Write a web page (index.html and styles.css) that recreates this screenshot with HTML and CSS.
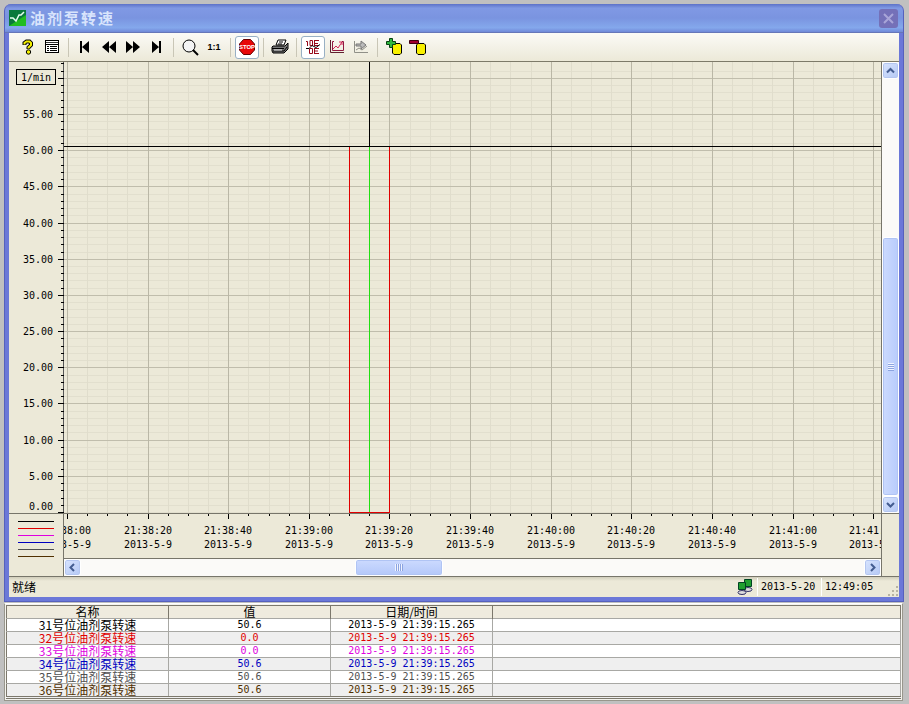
FILE: index.html
```html
<!DOCTYPE html>
<html lang="zh-CN">
<head>
    <meta charset="UTF-8">
    <meta name="viewport" content="width=device-width, initial-scale=1.0">
    <title>油剂泵转速</title>
    <link rel="stylesheet" href="styles.css">
</head>
<body>
    <div class="window">
        <header class="titlebar">
            <svg class="logo" width="17" height="16" viewBox="0 0 17 16"><rect width="17" height="16" fill="#0a7a3c"/><path d="M0 16L17 5V16Z" fill="#20bd20"/><path d="M1 8H4L7 11L10 5H12L15 2" stroke="#e8fff0" stroke-width="1.500" fill="none"/></svg>
            <h1>油剂泵转速</h1>
            <button class="close" aria-label="关闭"><svg width="19" height="19" viewBox="0 0 19 19"><path d="M5 5L14 14M14 5L5 14" stroke="#a9a5d8" stroke-width="2"/></svg></button>
        </header>

        <div class="toolbar">
            <button aria-label="帮助"><svg width="16" height="16" viewBox="0 0 16 16"><path d="M4.500 6V4L6.500 2.500H9.500L11 4V6L8.500 8.500V10" stroke="#000" stroke-width="4" fill="none"/><path d="M4.500 5.500V4L6.500 2.500H9.500L11 4V6L8.500 8.500V9.500" stroke="#f4f000" stroke-width="2" fill="none"/><circle cx="8.500" cy="13" r="2.200" fill="#f4f000" stroke="#000"/></svg></button>
            <button aria-label="属性"><svg width="16" height="16" viewBox="0 0 16 16" shape-rendering="crispEdges"><path d="M1.500 1.500H14.500V13.500H1.500Z" fill="#fff" stroke="#000"/><path d="M2 3.500H14" stroke="#333"/><path d="M1 5.500H15" stroke="#000"/><path d="M3 7.500H5M6 7.500H13M3 9.500H5M6 9.500H13M3 11.500H5M6 11.500H13" stroke="#000"/></svg></button>
            <span class="sep"></span>
            <button aria-label="第一条"><svg width="16" height="16" viewBox="0 0 16 16"><path d="M3 2H5V14H3ZM12 2V14L5 8Z"/></svg></button>
            <button aria-label="后退"><svg width="16" height="16" viewBox="0 0 16 16"><path d="M8 2V14L1 8ZM15 2V14L8 8Z"/></svg></button>
            <button aria-label="前进"><svg width="16" height="16" viewBox="0 0 16 16"><path d="M1 2V14L8 8ZM8 2V14L15 8Z"/></svg></button>
            <button aria-label="最后一条"><svg width="16" height="16" viewBox="0 0 16 16"><path d="M3 2V14L10 8ZM10 2H12V14H10Z"/></svg></button>
            <span class="sep"></span>
            <button aria-label="缩放"><svg width="18" height="18" viewBox="0 0 18 18"><circle cx="8" cy="8" r="6" fill="#f4f4f4" stroke="#000"/><path d="M12 12L17 17" stroke="#000" stroke-width="2"/></svg></button>
            <button class="ratio">1:1</button>
            <span class="sep"></span>
            <button class="on" aria-label="停止"><svg width="16" height="16" viewBox="0 0 16 16"><path d="M4.500 .5H11.500L15.500 5V11L11.500 15.500H4.500L.5 11V5Z" fill="#e80808" stroke="#600"/><text class="stop" x="8" y="10">STOP</text></svg></button>
            <span class="sep"></span>
            <button aria-label="打印"><svg width="18" height="16" viewBox="0 0 18 16"><path d="M5 6L7 1H15L13 6Z" fill="#fff" stroke="#000"/><path d="M8 3H12M7 5H11" stroke="#000"/><path d="M2 7H14L17 4V10L13 14H2L1 12V8Z" fill="#777" stroke="#000"/><path d="M1 9.500H13M2 12H13L16 8" stroke="#000" fill="none"/><path d="M3 11H11" stroke="#eee"/></svg></button>
            <span class="sep"></span>
            <button class="on" aria-label="标尺"><svg width="16" height="16" viewBox="0 0 16 16" fill="none"><path d="M1 2.500H2.500V7M5 1.500H7.500V6.500H5ZM9 1.500H14M9.500 1V7M9 4.500H13M9 6.500H14M4.500 9.500H7.500V14.500H4.500ZM9 9.500H14M9.500 9V15M9 12H13M9 14.500H14" stroke="#980818"/><path d="M1 9.500H4L7 6.500L11 8.500L15 5.500" stroke="#000"/></svg></button>
            <button aria-label="曲线"><svg width="16" height="16" viewBox="0 0 16 16" fill="none"><path d="M1.500 1V13.500H15" stroke="#602030"/><path d="M5 2.500H3.500V11.500H14.500V2.500H13" stroke="#901840"/><path d="M4 10L7 7L9 9L13 3M10 3H13V6" stroke="#d02858"/></svg></button>
            <button aria-label="导出" disabled><svg width="16" height="16" viewBox="0 0 16 16" fill="none"><path d="M1.500 2V13.500H15M3 11L6 9L9 11L14 7" stroke="#909088"/><path d="M3 5H8V2L13 6L8 10V7H3Z" fill="#bbb" stroke="#777"/></svg></button>
            <span class="sep"></span>
            <button aria-label="添加变量"><svg width="18" height="18" viewBox="0 0 18 18"><path d="M7.500 7L9 5.500H15L16.500 7V15L15 16.500H9L7.500 15Z" fill="#f8f000" stroke="#000"/><path d="M4.500 .5H7.500V3.500H10.500V6.500H7.500V9.500H4.500V6.500H1.500V3.500H4.500Z" fill="#30b840" stroke="#084010"/></svg></button>
            <button aria-label="删除变量"><svg width="18" height="18" viewBox="0 0 18 18"><path d="M7.500 7L9 5.500H15L16.500 7V15L15 16.500H9L7.500 15Z" fill="#f8f000" stroke="#000"/><path d="M.5 2.500H9.500V5.500H.5Z" fill="#a00030" stroke="#400010"/></svg></button>
        </div>

        <main class="chart">
            <svg class="y-axis" id="yAxis"></svg>
            <svg class="plot" id="plot"></svg>
            <div class="scroll vertical">
                <button aria-label="向上"><svg width="9" height="9" viewBox="0 0 9 9"><path d="M1 6.500L4.500 3L8 6.500"/></svg></button>
                <div class="track"><div class="thumb"></div></div>
                <button aria-label="向下"><svg width="9" height="9" viewBox="0 0 9 9"><path d="M1 3L4.500 6.500L8 3"/></svg></button>
            </div>
            <div class="legend">
                <i class="c31"></i><i class="c32"></i><i class="c33"></i><i class="c34"></i><i class="c35"></i><i class="c36"></i>
            </div>
            <svg class="x-axis" id="xAxis"></svg>
            <div class="scroll horizontal">
                <button aria-label="向左"><svg width="9" height="9" viewBox="0 0 9 9"><path d="M6 1L2.500 4.500L6 8"/></svg></button>
                <div class="track"><div class="thumb"></div></div>
                <button aria-label="向右"><svg width="9" height="9" viewBox="0 0 9 9"><path d="M3 1L6.500 4.500L3 8"/></svg></button>
            </div>
            <div class="corner"></div>
        </main>

        <footer class="status">
            <span class="ready">就绪</span>
            <svg class="net" width="16" height="16" viewBox="0 0 16 16"><path d="M7.500 .5H14.500V7.500H7.500Z" fill="#20a030" stroke="#042"/><ellipse cx="11" cy="10.500" rx="4" ry="2" fill="#ddd" stroke="#336"/><path d="M1.500 3.500H8.500V10.500H1.500Z" fill="#20a030" stroke="#042"/><ellipse cx="5" cy="13.500" rx="4" ry="2" fill="#ddd" stroke="#336"/></svg>
            <span class="cell">2013-5-20</span>
            <span class="cell time">12:49:05</span>
            <svg class="grip" width="12" height="12" viewBox="0 0 12 12" fill="#b8b4a2"><path d="M9 1H11V3H9ZM9 5H11V7H9ZM5 5H7V7H5ZM9 9H11V11H9ZM5 9H7V11H5ZM1 9H3V11H1Z"/></svg>
        </footer>
    </div>

    <div class="panel">
        <table>
            <thead>
                <tr><th>名称</th><th>值</th><th>日期/时间</th><th class="rest"></th></tr>
            </thead>
            <tbody>
                <tr class="c31"><td class="name">31号位油剂泵转速</td><td>50.6</td><td>2013-5-9 21:39:15.265</td><td></td></tr>
                <tr class="c32"><td class="name">32号位油剂泵转速</td><td>0.0</td><td>2013-5-9 21:39:15.265</td><td></td></tr>
                <tr class="c33"><td class="name">33号位油剂泵转速</td><td>0.0</td><td>2013-5-9 21:39:15.265</td><td></td></tr>
                <tr class="c34"><td class="name">34号位油剂泵转速</td><td>50.6</td><td>2013-5-9 21:39:15.265</td><td></td></tr>
                <tr class="c35"><td class="name">35号位油剂泵转速</td><td>50.6</td><td>2013-5-9 21:39:15.265</td><td></td></tr>
                <tr class="c36"><td class="name">36号位油剂泵转速</td><td>50.6</td><td>2013-5-9 21:39:15.265</td><td></td></tr>
            </tbody>
        </table>
    </div>

    <script src="script.js"></script>
</body>
</html>
```
FILE: styles.css
```css
* {
    box-sizing: border-box;
}
body {
    margin: 0;
    height: 100vh;
    padding: 4px 6px 3px 4px;
    display: flex;
    flex-direction: column;
    background: #c0c0c0;
    font-family: "DejaVu Sans Mono", "Noto Sans CJK SC", monospace;
    font-size: 10px;
    color: #000;
}
svg {
    display: block;
}
button {
    padding: 0;
    border: 0;
    background: none;
    font: inherit;
    color: inherit;
    display: flex;
    align-items: center;
    justify-content: center;
}

/* window */
.window {
    flex: 1;
    min-height: 0;
    display: flex;
    flex-direction: column;
    padding: 0 4px 4px;
    background: #6b78d8;
    border: 1px solid #5661bd;
    border-top: 0;
    border-radius: 7px 7px 0 0;
    margin-right: -1px;
}
.titlebar {
    height: 29px;
    flex: none;
    display: flex;
    align-items: center;
    gap: 4px;
    margin: 0 -4px;
    padding: 0 5px 0 4px;
    border-radius: 7px 7px 0 0;
    background: linear-gradient(#5c72c8, #8099e4 15%, #7a94e0 50%, #84a8ec 85%, #7088d8);
    border-bottom: 1px solid #6676b8;
}
h1 {
    flex: 1;
    margin: 0;
    font: bold 15px/20px "Noto Sans CJK SC", sans-serif;
    letter-spacing: 2px;
    color: #d8e4fc;
}
.close {
    width: 19px;
    height: 19px;
    border-radius: 3px;
    background: #7470b8;
}

.toolbar {
    height: 29px;
    flex: none;
    display: flex;
    align-items: center;
    padding: 0 7px;
    background: linear-gradient(#fbfaf6, #ece9d8);
    border-bottom: 1px solid #7d7a69;
}
.toolbar button {
    width: 24px;
    height: 23px;
}
.toolbar .on {
    background: #fff;
    border: 1px solid #98b0c4;
    border-radius: 3px;
}
.toolbar .ratio {
    font: bold 9px "Liberation Sans", sans-serif;
}
.sep {
    width: 1px;
    height: 19px;
    margin: 0 4px;
    background: #c9c6b6;
}
.stop {
    font: bold 6px "Liberation Sans", sans-serif;
    text-anchor: middle;
    fill: #fff;
}

/* chart */
.chart {
    flex: 1;
    min-height: 0;
    display: grid;
    grid-template-columns: 55px 1fr 18px;
    grid-template-rows: 1fr 45px 18px;
    background: #ece9d8;
}
.chart svg {
    overflow: hidden;
}
.y-axis, .x-axis, .plot {
    width: 100%;
    height: 100%;
    min-height: 0;
    shape-rendering: crispEdges;
}
.chart text {
    font-size: 10px;
}
.y-axis text {
    text-anchor: end;
}
.x-axis text {
    text-anchor: middle;
}
.legend {
    grid-row: 2 / 4;
    padding: 7px 9px;
    border-top: 1px solid #77756a;
    border-right: 1px solid #77756a;
    display: flex;
    flex-direction: column;
    gap: 6px;
}
.legend i {
    height: 1px;
    background: currentColor;
}
.corner {
    grid-column: 3;
    grid-row: 2 / 4;
    border-top: 1px solid #77756a;
    border-left: 1px solid #77756a;
}

.scroll {
    display: flex;
    background: #fbfaf8;
}
.vertical {
    flex-direction: column;
    border-left: 1px solid #77756a;
}
.horizontal {
    grid-column: 2;
    grid-row: 3;
    border-top: 1px solid #77756a;
}
.scroll button {
    width: 17px;
    height: 17px;
    flex: none;
    border: 1px solid #fff;
    border-radius: 3px;
    background: linear-gradient(135deg, #d8e4fe, #b4c8f4);
    box-shadow: inset 0 0 0 1px #b4c6f0;
}
.scroll svg {
    stroke: #435c90;
    stroke-width: 2;
    fill: none;
}
.track {
    flex: 1;
    display: flex;
}
.vertical .track {
    flex-direction: column;
}
.thumb {
    display: flex;
    align-items: center;
    justify-content: center;
    border: 1px solid #fff;
    border-radius: 3px;
    box-shadow: inset 0 0 0 1px #b0c4f4;
}
.thumb::after {
    content: "";
}
.vertical .thumb {
    margin-top: 158px;
    flex: 1;
    background: linear-gradient(90deg, #ccdafe, #b8ccfc);
}
.vertical .thumb::after {
    width: 6px;
    height: 8px;
    background: repeating-linear-gradient(#f0f4ff 0 1px, #8ca4e0 1px 2px);
}
.horizontal .thumb {
    width: 88px;
    margin-left: 35%;
    background: linear-gradient(#ccdafe, #b4c8fa);
}
.horizontal .thumb::after {
    width: 8px;
    height: 7px;
    background: repeating-linear-gradient(90deg, #f0f4ff 0 1px, #8ca4e0 1px 2px);
}

/* status bar */
.status {
    height: 21px;
    flex: none;
    display: flex;
    align-items: center;
    padding-left: 3px;
    background: linear-gradient(#d0cdbb, #ece9d8 4px);
    border-top: 1px solid #77756a;
}
.ready {
    flex: 1;
    font: 12px/16px "Noto Sans CJK SC", sans-serif;
}
.net {
    margin-right: 4px;
}
.cell {
    width: 64px;
    line-height: 18px;
    padding-left: 3px;
    border-left: 1px solid #fff;
}
.time {
    width: 66px;
}
.grip {
    align-self: flex-end;
}

/* value table */
.panel {
    flex: none;
    margin-top: 1px;
    padding: 1px;
    background: #f4f3ee;
    border: 1px solid #98968c;
    border-top-color: #fff;
}
table {
    width: 100%;
    table-layout: fixed;
    border-collapse: collapse;
    border: 1px solid #7c786c;
    border-bottom: 3px double #7c786c;
    background: #fff;
}
th, td {
    width: 162px;
    height: 13px;
    padding: 0;
    line-height: 12px;
    text-align: center;
    border: 1px solid #a8a8a4;
    border-width: 1px 1px 0 0;
}
th {
    background: #efebde;
    font: 12px/12px "Noto Sans CJK SC", sans-serif;
    border-color: #7c786c;
}
.rest {
    width: auto;
}
tbody tr:nth-child(even) {
    background: #efefef;
}
.name {
    font: 12px/12px "Noto Sans CJK SC", sans-serif;
}
.c31 { color: #000; }
.c32 { color: #e00000; }
.c33 { color: #e000e0; }
.c34 { color: #0000c0; }
.c35 { color: #505050; }
.c36 { color: #503000; }
```
FILE: script.js
```js
const NS = "http://www.w3.org/2000/svg";
const yAxis = document.getElementById("yAxis");
const xAxis = document.getElementById("xAxis");
const plot = document.getElementById("plot");

const maxValue = 62.2;
const seconds = 202.7;   // visible time span
const firstMark = 0.75;  // seconds from the left edge to 21:38:00

function add(svg, tag, attrs) {
    const el = document.createElementNS(NS, tag);
    for (const key in attrs) el.setAttribute(key, attrs[key]);
    svg.appendChild(el);
    return el;
}

// one pixel wide, both ends included
function line(svg, x1, y1, x2, y2, color) {
    add(svg, "rect", { x: x1, y: y1, width: x2 - x1 + 1, height: y2 - y1 + 1, fill: color });
}

function label(svg, x, y, text) {
    add(svg, "text", { x, y }).textContent = text;
}

function draw() {
    [yAxis, xAxis, plot].forEach(svg => svg.innerHTML = "");
    const w = plot.clientWidth;
    const h = plot.clientHeight;
    const toX = s => Math.round((s + firstMark) * w / seconds);
    const toY = v => Math.round(h - 1 - v * (h - 1) / maxValue);

    // fine grid first, main grid over it
    for (let v = 0; v < 62; v++) line(plot, 0, toY(v), w, toY(v), "#e2dfce");
    for (let s = 0; s < 202; s += 5) line(plot, toX(s), 0, toX(s), h, "#e0ddcc");
    for (let v = 5; v <= 60; v += 5) line(plot, 0, toY(v), w, toY(v), "#c0bdac");
    for (let s = 0; s <= 200; s += 20) line(plot, toX(s), 0, toX(s), h, "#bab7a6");

    // value scale
    line(yAxis, 54, 0, 54, h, "#555");
    for (let v = 0; v <= 62; v++) {
        line(yAxis, v % 5 ? 52 : 49, toY(v), 54, toY(v), "#000");
    }
    for (let v = 0; v <= 55; v += 5) {
        label(yAxis, 44, v ? toY(v) + 4 : h - 3, v.toFixed(2));
    }
    add(yAxis, "rect", { x: 7.5, y: 7.5, width: 39, height: 15, fill: "none", stroke: "#000" });
    label(yAxis, 42, 19, "1/min");

    // time scale
    line(xAxis, 0, 0, w, 0, "#77756a");
    for (let s = 0; s <= 200; s += 5) {
        line(xAxis, toX(s), 1, toX(s), s % 20 ? 2 : 5, "#000");
    }
    for (let s = 0; s <= 200; s += 20) {
        const minute = 38 + Math.floor(s / 60);
        label(xAxis, toX(s), 21, `21:${minute}:${String(s % 60).padStart(2, "0")}`);
        label(xAxis, toX(s), 35, "2013-5-9");
    }

    // curves and the reading line
    const top = toY(50.6);
    line(plot, 0, top, w, top, "#000");
    line(plot, toX(70), top + 1, toX(70), h - 1, "#e00000");
    line(plot, toX(80), top + 1, toX(80), h - 1, "#e00000");
    line(plot, toX(70), h - 1, toX(80), h - 1, "#e00000");
    line(plot, toX(75), 0, toX(75), top, "#000");
    line(plot, toX(75), top + 1, toX(75), h - 2, "#20e010");
}

draw();
window.addEventListener("resize", draw);
```
